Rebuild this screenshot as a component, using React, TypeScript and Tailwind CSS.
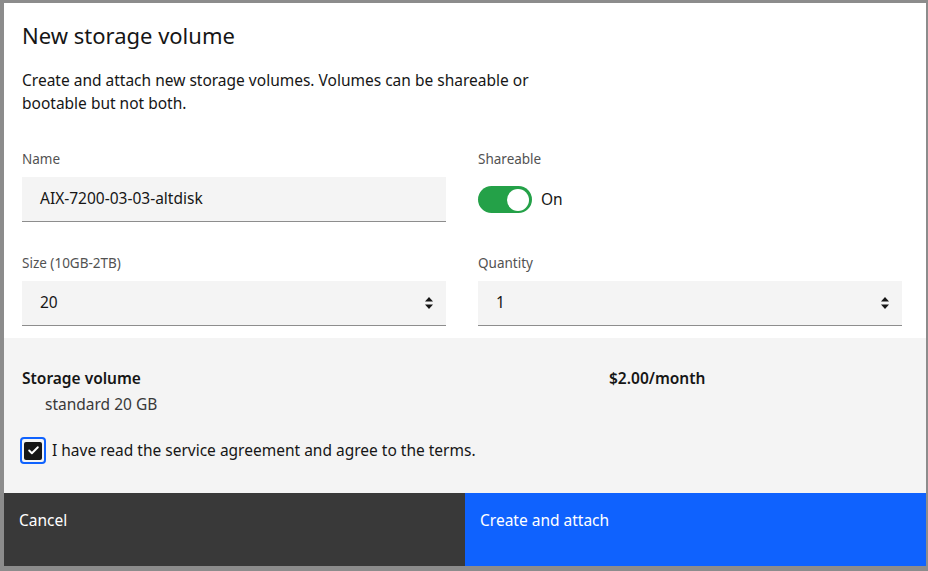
import { Check } from 'lucide-react'

const font = { fontFamily: '"Noto Sans", "Open Sans", sans-serif' }

const NumberArrows = () => (
  <svg width="10" height="16" viewBox="0 0 10 16" className="text-[#161616]">
    <path d="M5 2 L9 6.5 H1 Z" fill="currentColor" />
    <path d="M5 14 L9 9.5 H1 Z" fill="currentColor" />
  </svg>
)

interface FieldProps {
  label: string
  value: string
  number?: boolean
}

const Field = ({ label, value, number }: FieldProps) => {
  return (
    <div className="flex flex-col">
      <label className="text-[13.5px] leading-[18px] text-[#525252] mb-[9px]">{label}</label>
      <div className="h-[45px] bg-[#f4f4f4] border-b border-[#8d8d8d] flex items-center pl-[18px] pr-[12px]">
        <span className="flex-1 text-[15.5px] text-[#161616]">{value}</span>
        {number && <NumberArrows />}
      </div>
    </div>
  )
}

export default function App() {
  return (
    <div className="w-[928px] h-[571px] bg-[#8c8c8c] pl-[4px] pt-[3px] overflow-hidden" style={font}>
      <div className="w-[922px] h-[563px] bg-white flex flex-col">
        {/* Header + body */}
        <div className="pl-[18px] pr-[24px] pt-[18px]">
          <h2 className="text-[22px] leading-[28px] text-[#161616]">New storage volume</h2>
          <p className="mt-[20px] max-w-[545px] text-[15.5px] leading-[23px] text-[#161616]">
            Create and attach new storage volumes. Volumes can be shareable or bootable but not both.
          </p>

          <div className="grid grid-cols-2 gap-x-[32px] mt-[35px]">
            <Field label="Name" value="AIX-7200-03-03-altdisk" />
            <div className="flex flex-col">
              <label className="text-[13.5px] leading-[18px] text-[#525252] mb-[9px]">Shareable</label>
              <div className="flex items-center gap-[9px] h-[45px]">
                <div className="w-[54px] h-[27px] rounded-full bg-[#24a148] flex items-center justify-end pr-[3px]">
                  <div className="w-[22px] h-[22px] rounded-full bg-white" />
                </div>
                <span className="text-[15.5px] text-[#161616]">On</span>
              </div>
            </div>
          </div>

          <div className="grid grid-cols-2 gap-x-[32px] mt-[32px]">
            <Field label="Size (10GB-2TB)" value="20" number />
            <Field label="Quantity" value="1" number />
          </div>
        </div>

        {/* Summary */}
        <div className="mt-[12px] flex-1 bg-[#f4f4f4] pl-[18px] pr-[24px] pt-[29px]">
          <div className="grid grid-cols-[587px_1fr]">
            <div>
              <div className="text-[15.5px] leading-[22px] font-semibold text-[#161616]">Storage volume</div>
              <div className="pl-[23px] mt-[4px] text-[15.5px] leading-[22px] text-[#393939]">standard 20 GB</div>
            </div>
            <div className="text-[15.5px] leading-[22px] font-semibold text-[#161616]">$2.00/month</div>
          </div>
          <label className="flex items-center gap-[6px] mt-[22px] -ml-[2px]">
            <span className="w-[26px] h-[27px] rounded-[4px] border-2 border-[#0f62fe] flex items-center justify-center">
              <span className="w-[18px] h-[18px] rounded-[2px] bg-[#161616] flex items-center justify-center">
                <Check className="w-[13px] h-[13px] text-white" strokeWidth={3.5} />
              </span>
            </span>
            <span className="text-[15.5px] text-[#161616]">I have read the service agreement and agree to the terms.</span>
          </label>
        </div>

        {/* Footer */}
        <div className="h-[73px] grid grid-cols-2">
          <button className="bg-[#393939] text-white text-left pl-[15px] pt-[16px] self-stretch flex items-start text-[15.5px] leading-[22px]">
            Cancel
          </button>
          <button className="bg-[#0f62fe] text-white text-left pl-[15px] pt-[16px] self-stretch flex items-start text-[15.5px] leading-[22px]">
            Create and attach
          </button>
        </div>
      </div>
    </div>
  )
}
